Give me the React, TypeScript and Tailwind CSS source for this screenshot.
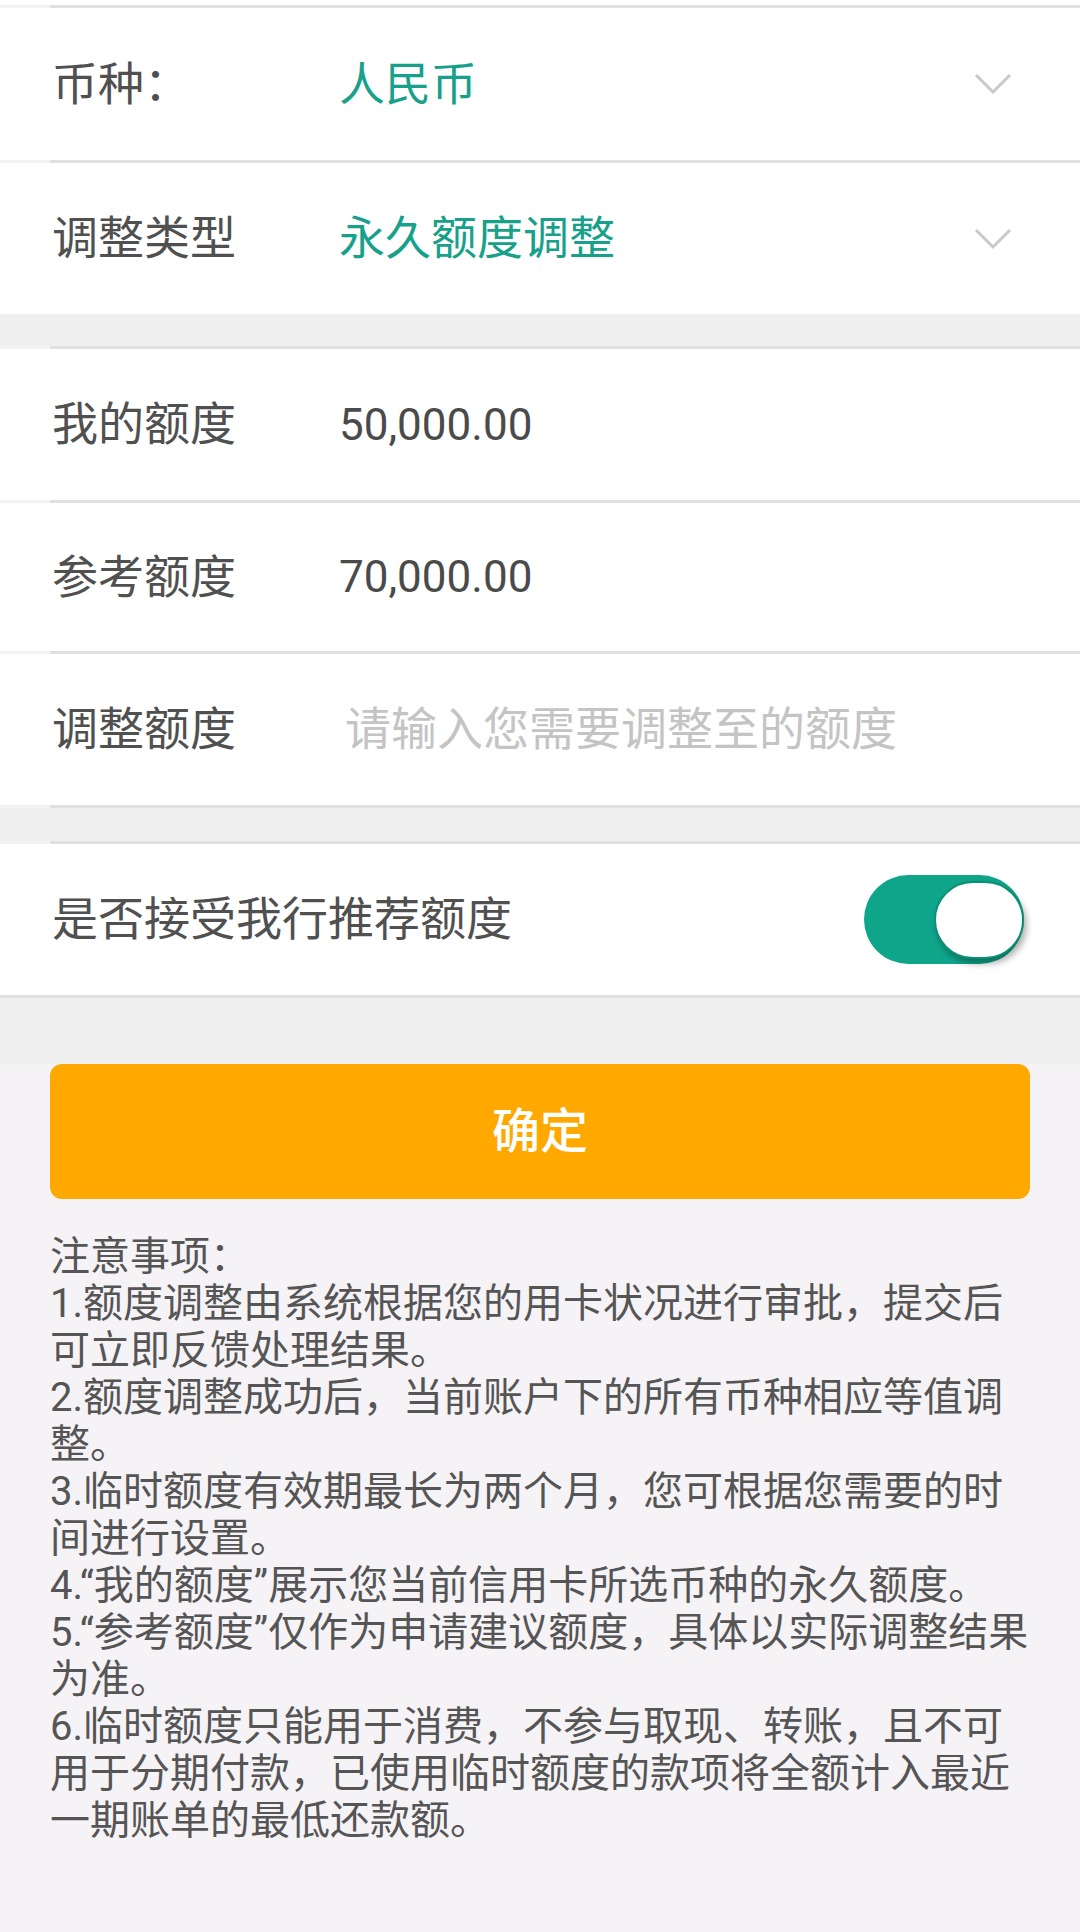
import React from "react";

const font = { fontFamily: "Roboto, 'Noto Sans CJK SC', sans-serif" };

function Divider({ full = false }: { full?: boolean }) {
  if (full) return <div className="h-[3px] bg-[#e0e0e0]" />;
  return (
    <div className="flex h-[3px]">
      <div className="w-[50px] bg-[#f4f2f4]" />
      <div className="flex-1 bg-[#e0e0e0]" />
    </div>
  );
}

function Chevron() {
  return (
    <svg width="38" height="22" viewBox="0 0 38 22" fill="none">
      <path d="M2 2 L19 19 L36 2" stroke="#c9c9c9" strokeWidth="3" />
    </svg>
  );
}

function SelectRow({ label, value, h }: { label: string; value: string; h: string }) {
  return (
    <div className={`flex items-center bg-white pl-[52px] pr-[68px] ${h}`}>
      <div className="w-[287px] text-[46px] text-[#505050]">{label}</div>
      <div className="flex-1 text-[46px] text-[#17a08a]">{value}</div>
      <Chevron />
    </div>
  );
}

function InfoRow({ label, children, h }: { label: string; children: React.ReactNode; h: string }) {
  return (
    <div className={`flex items-center bg-white pl-[52px] ${h}`}>
      <div className="w-[287px] text-[46px] text-[#505050]">{label}</div>
      {children}
    </div>
  );
}

const notes = [
  "注意事项：",
  "1.额度调整由系统根据您的用卡状况进行审批，提交后",
  "可立即反馈处理结果。",
  "2.额度调整成功后，当前账户下的所有币种相应等值调",
  "整。",
  "3.临时额度有效期最长为两个月，您可根据您需要的时",
  "间进行设置。",
  "4.“我的额度”展示您当前信用卡所选币种的永久额度。",
  "5.“参考额度”仅作为申请建议额度，具体以实际调整结果",
  "为准。",
  "6.临时额度只能用于消费，不参与取现、转账，且不可",
  "用于分期付款，已使用临时额度的款项将全额计入最近",
  "一期账单的最低还款额。",
];

export default function App() {
  return (
    <div className="min-h-[1932px] w-[1080px] bg-[#f5f3f6]" style={font}>
      <div className="h-[5px] bg-white" />
      <Divider />
      <SelectRow label="币种：" value="人民币" h="h-[152px]" />
      <Divider />
      <SelectRow label="调整类型" value="永久额度调整" h="h-[151px]" />

      <div className="h-[32px] bg-[#efefef]" />
      <Divider />
      <InfoRow label="我的额度" h="h-[151px]">
        <span className="text-[44px] text-[#4a4a4a]">50,000.00</span>
      </InfoRow>
      <Divider />
      <InfoRow label="参考额度" h="h-[148px]">
        <span className="text-[44px] text-[#4a4a4a]">70,000.00</span>
      </InfoRow>
      <Divider />
      <InfoRow label="调整额度" h="h-[151px]">
        <input
          className="ml-[6px] flex-1 bg-transparent text-[46px] text-[#4a4a4a] outline-none placeholder:text-[#c4c4c4]"
          placeholder="请输入您需要调整至的额度"
          style={font}
        />
      </InfoRow>
      <Divider />

      <div className="h-[33px] bg-[#efefef]" />
      <Divider />
      <div className="flex h-[151px] items-center justify-between bg-white pl-[52px] pr-[56px]">
        <span className="text-[46px] text-[#505050]">是否接受我行推荐额度</span>
        <div className="relative h-[89px] w-[160px] rounded-full bg-[#0fa58a]">
          <div className="absolute right-0 top-[6px] h-[78px] w-[90px] rounded-full border-2 border-[#0b8f77] bg-white shadow-[3px_5px_6px_rgba(0,0,0,0.3)]" />
        </div>
      </div>
      <Divider full />
      <div className="h-[66px] bg-[#efefef]" />

      <div className="px-[50px]">
        <button className="flex h-[135px] w-full items-center justify-center rounded-[12px] bg-[#fea800] text-[48px] font-medium text-white">
          确定
        </button>
        <div className="mt-[34px] text-[40px] leading-[47px] text-[#555555]">
          {notes.map((line, i) => (
            <div key={i} className="whitespace-nowrap">
              {line}
            </div>
          ))}
        </div>
      </div>
    </div>
  );
}
